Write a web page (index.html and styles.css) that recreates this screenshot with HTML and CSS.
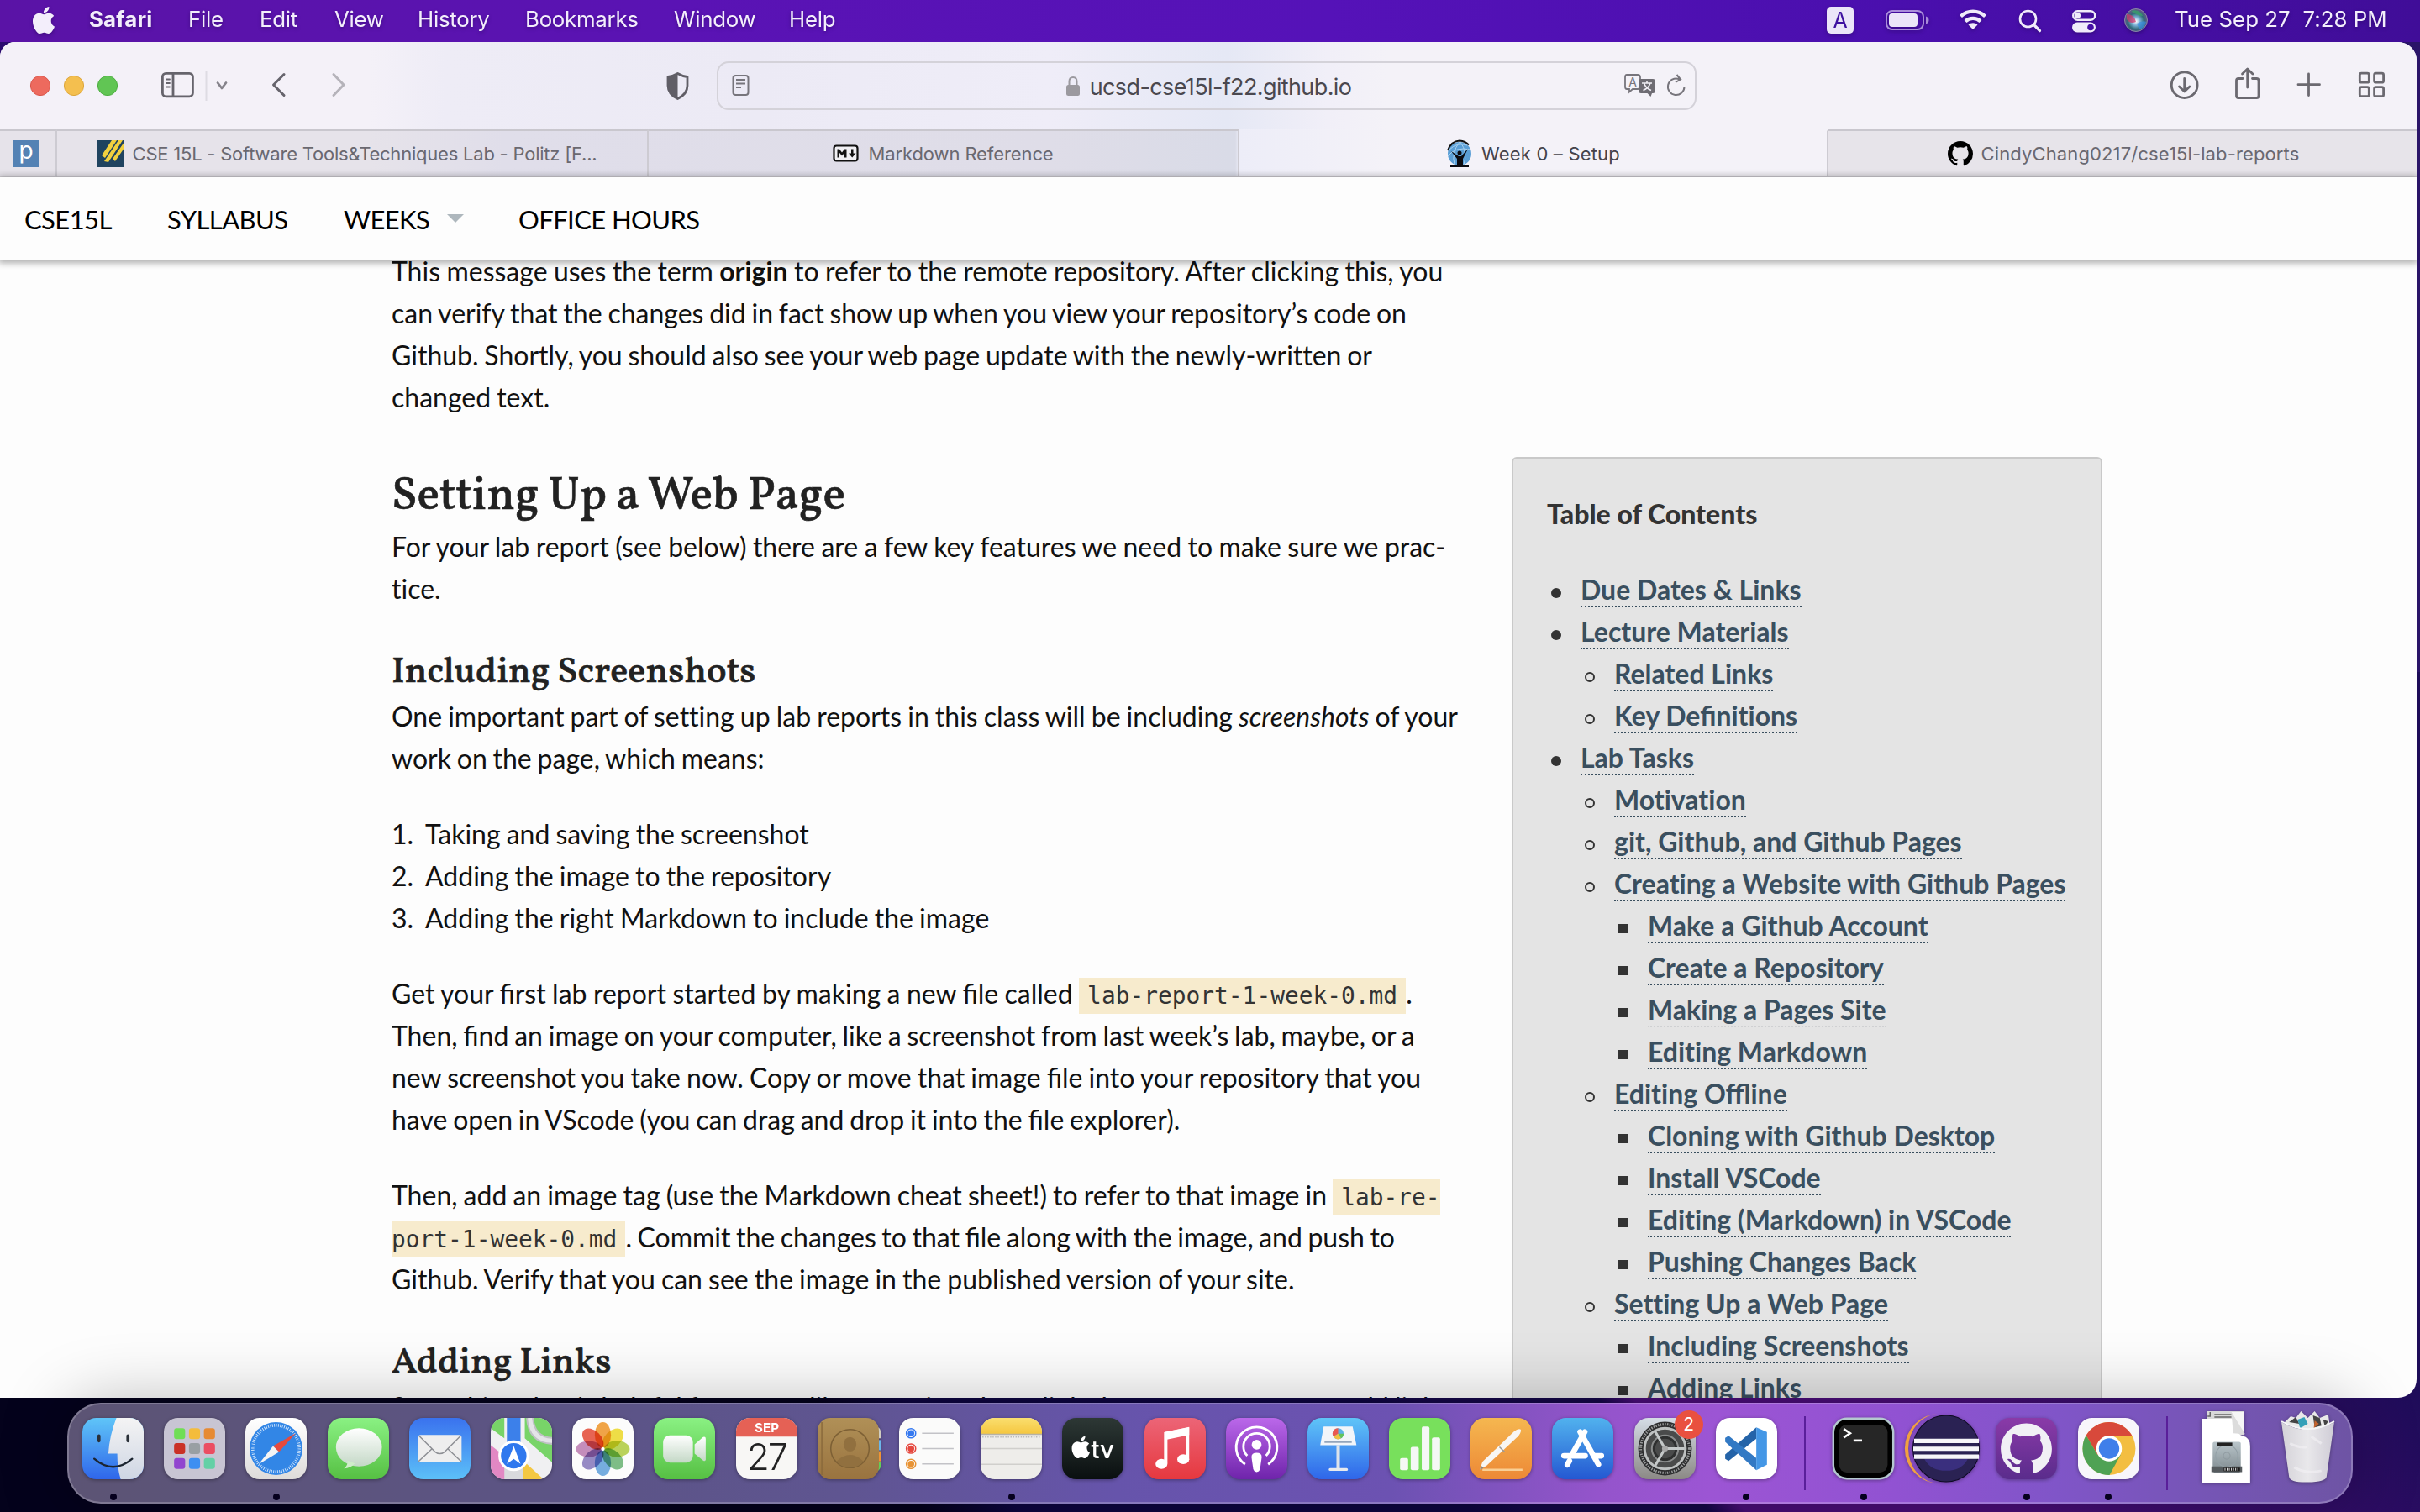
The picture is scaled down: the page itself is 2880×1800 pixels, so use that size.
FILE: index.html
```html
<!DOCTYPE html>
<html lang="en">
<head>
<meta charset="utf-8">
<title>Week 0 – Setup</title>
<link rel="stylesheet" href="styles.css">
</head>
<body>
<div class="desktop">
  <header class="menubar">
    <svg class="apple" viewBox="0 0 24 24"><path d="M12.152 6.896c-.948 0-2.415-1.078-3.96-1.04-2.04.027-3.91 1.183-4.961 3.014-2.117 3.675-.546 9.103 1.519 12.09 1.013 1.454 2.208 3.09 3.792 3.039 1.52-.065 2.09-.987 3.935-.987 1.831 0 2.35.987 3.96.948 1.637-.026 2.676-1.48 3.676-2.948 1.156-1.688 1.636-3.325 1.662-3.415-.039-.013-3.182-1.221-3.22-4.857-.026-3.04 2.48-4.494 2.597-4.559-1.429-2.09-3.623-2.324-4.39-2.376-2-.156-3.675 1.09-4.61 1.09zM15.53 3.83c.843-1.012 1.4-2.427 1.245-3.83-1.207.052-2.662.805-3.532 1.818-.78.896-1.454 2.338-1.273 3.714 1.338.104 2.715-.688 3.559-1.701"/></svg>
    <nav class="menus">
      <span class="menu app">Safari</span><span class="menu file">File</span><span class="menu edit">Edit</span><span class="menu view">View</span><span class="menu history">History</span><span class="menu bookmarks">Bookmarks</span><span class="menu window-menu">Window</span><span class="menu">Help</span>
    </nav>
    <svg class="status" width="382" height="48" viewBox="2174 0 382 48">
      <rect x="2174" y="8" width="32" height="32" rx="5" fill="#ebe5f8"/>
      <text x="2190" y="33" font-size="25" text-anchor="middle" fill="#3e10a0">A</text>
      <rect x="2245" y="13" width="44" height="22" rx="7" fill="none" stroke="#a98cda" stroke-width="2"/>
      <rect x="2248" y="16" width="34" height="16" rx="4" fill="#ebe5f8"/>
      <path d="M2292 19.500q3.500 1.500 3.500 4.500t-3.500 4.500z" fill="#a98cda"/>
      <g fill="none" stroke="#f0ebfa" stroke-width="4.200">
        <path d="M2333.500 19.500a21 21 0 0 1 29 0"/><path d="M2339 25.500a13 13 0 0 1 18 0"/>
      </g>
      <path d="M2342.500 29.500a8 8 0 0 1 11 0l-5.500 5.500z" fill="#f0ebfa"/>
      <circle cx="2413.500" cy="22.500" r="9.500" fill="none" stroke="#f0ebfa" stroke-width="2.600"/>
      <path d="M2420.500 29.500l7 7" stroke="#f0ebfa" stroke-width="3.200" stroke-linecap="round"/>
      <rect x="2467.200" y="13.200" width="26" height="10.600" rx="5.300" fill="none" stroke="#f0ebfa" stroke-width="2.400"/>
      <circle cx="2472.500" cy="18.500" r="3.600" fill="#f0ebfa"/>
      <rect x="2466" y="26.500" width="28" height="12" rx="6" fill="#f0ebfa"/>
      <circle cx="2488" cy="32.500" r="3.800" fill="#450fa6"/>
      <defs>
        <radialGradient id="siri" cx=".5" cy=".55"><stop offset="0" stop-color="#fff"/><stop offset=".35" stop-color="#7fb4d8"/><stop offset=".7" stop-color="#2f6a78"/><stop offset="1" stop-color="#5c5a86"/></radialGradient>
      </defs>
      <circle cx="2542" cy="24" r="13.500" fill="url(#siri)" stroke="#8a86a8"/>
      <path d="M2531 17q9 0 11 9q-7 3-11-3z" fill="#d0386c" opacity=".75"/>
      <path d="M2536 13q10-3 14 6q-6 0-14-6z" fill="#3aa06a" opacity=".8"/>
      <path d="M2543 28q7-4 11-2q-2 8-8 9z" fill="#3a8fe0" opacity=".7"/>
    </svg>
    <span class="clock">Tue Sep 27&nbsp; 7:28 PM</span>
  </header>

  <main class="window">
    <div class="toolbar">
      <svg width="398" height="104" viewBox="30 50 398 104">
        <circle cx="48" cy="102" r="11.600" fill="#ed6a5e" stroke="#d9574c"/><circle cx="88" cy="102" r="11.600" fill="#f4bf4f" stroke="#dda63c"/><circle cx="128" cy="102" r="11.600" fill="#61c554" stroke="#4dae41"/>
        <g fill="none" stroke="#66646c" stroke-width="2.800" stroke-linecap="round" stroke-linejoin="round">
          <rect x="193.400" y="87.400" width="36" height="27.400" rx="4"/><path d="M206 88v26"/>
          <path d="M198 94.500h4M198 99h4M198 103.500h4" stroke-width="1.800"/>
          <path d="M259 98.500l5 6.500 5-6.500" stroke="#85838b"/>
          <path d="M338 88.500l-12.500 12.500 12.500 12.500" stroke-width="3"/>
          <path d="M397 88.500l12 12.500-12 12.500" stroke="#b5b3ba" stroke-width="3"/>
        </g>
        <path d="M245.500 84v36" stroke="#dedce3" stroke-width="2"/>
      </svg>
      <svg class="shield" width="28" height="34" viewBox="792 84 28 34">
        <path d="M806.500 86.500q6 3.500 11.500 4v10.500q0 10-11.500 15.500-11.500-5.500-11.500-15.500v-10.500q5.500-.5 11.500-4z" fill="none" stroke="#605e66" stroke-width="2.800" stroke-linejoin="round"/><path d="M806.500 86.500v30q-11.500-5.500-11.500-15.500v-10.500z" fill="#605e66"/>
      </svg>
      <div class="address">
        <svg width="22" height="28" viewBox="870 89 22 28"><g fill="none" stroke="#77757c" stroke-width="2"><rect x="872.500" y="91" width="18" height="23" rx="3"/><path d="M876 96h11M876 100.500h11M876 105h6"/></g></svg>
        <div class="url">
          <svg width="16" height="25" viewBox="1268 91 16 25"><rect x="1268" y="102" width="16" height="13" rx="2.500" fill="#9b999f"/><path d="M1271.500 103v-5q0-5 4.500-5t4.500 5v5" fill="none" stroke="#9b999f" stroke-width="2"/></svg>
          <span>ucsd-cse15l-f22.github.io</span>
        </div>
        <svg width="76" height="32" viewBox="1931 86 76 32">
          <path d="M1935 89h13q3 0 3 3v11q0 3-3 3h-6l-4 3.500v-3.500h-3q-2 0-2-3v-11q0-3 2-3z" fill="none" stroke="#77757c" stroke-width="1.800"/>
          <text x="1942" y="103" font-size="14" text-anchor="middle" fill="#77757c">A</text>
          <path d="M1952 94h14q3 0 3 3v11q0 3-3 3h-1l-1.500 4-4-4h-7.500q-3 0-3-3v-11q0-3 3-3z" fill="#6e6c73"/>
          <path d="M1953 99h12M1959 96.500v2.500M1963 99q-2 6-8.500 8.500M1955.500 99q2 6 8.500 8.500" fill="none" stroke="#f0eef5" stroke-width="1.600"/>
          <path d="M2003.500 103.500a9.800 9.800 0 1 1-6.500-9.500l-1 .2M1994.500 89l4.500 5.500-6 3.500" fill="none" stroke="#77757c" stroke-width="2"/>
        </svg>
      </div>
      <svg class="actions" width="258" height="104" viewBox="2580 50 258 104">
        <g fill="none" stroke="#6b6970" stroke-width="2.800" stroke-linecap="round" stroke-linejoin="round">
          <circle cx="2599.700" cy="101.200" r="15.400"/><path d="M2599.700 93.500v15M2593.500 103l6.200 6 6.200-6"/>
          <path d="M2669 93.500h-5q-2.500 0-2.500 2.500v18q0 2.500 2.500 2.500h21.500q2.500 0 2.500-2.500v-18q0-2.500-2.500-2.500h-5M2674.700 104v-21.500M2668.500 88l6.200-6 6.200 6"/>
          <path d="M2747.500 88v25.500M2735 100.700h25.500"/>
          <rect x="2808.300" y="87.200" width="11" height="11" rx="2"/><rect x="2825.600" y="87.200" width="11" height="11" rx="2"/><rect x="2808.300" y="103.700" width="11" height="11" rx="2"/><rect x="2825.600" y="103.700" width="11" height="11" rx="2"/>
        </g>
      </svg>
    </div>

    <div class="tabs">
      <div class="tab pinned"><svg width="32" height="32" viewBox="0 0 32 32"><rect width="32" height="32" fill="#5482b4"/><text x="16" y="22" font-size="28" text-anchor="middle" fill="#fff">p</text></svg></div>
      <div class="tab first"><svg width="32" height="32" viewBox="0 0 32 32"><rect width="32" height="32" fill="#1f435f"/><path d="M5 18L17 0h6L9 21zM8 25L25 0h5L13 26zM18 22L32 2v7L21 25z" fill="#f2d03e"/></svg><span>CSE 15L - Software Tools&amp;Techniques Lab - Politz [F...</span></div>
      <div class="tab second"><svg width="32" height="22" viewBox="0 0 32 22"><rect x="1.500" y="1.500" width="28" height="18" rx="3" fill="#f1f0f4" stroke="#111" stroke-width="2.200"/><path d="M5.500 15.500v-10h2.500l3 4 3-4h2.500v10H14V9.800l-3 3.800-3-3.800v5.700zM22 5.500h2.500v5h3l-4.300 5-4.200-5h3z" fill="#111"/></svg><span>Markdown Reference</span></div>
      <div class="tab active"><svg width="32" height="34" viewBox="0 0 32 34"><circle cx="16" cy="17" r="14" fill="#5b9fd6"/><path d="M4 12q9-9 21-5M2 20q9-12 27-8M10 30q-4-14 6-27M21 30q5-14-4-27" stroke="#a9d2f0" fill="none"/><path d="M2 13Q6 2 16 1.500q7 .5 11 5" stroke="#111" stroke-width="2" fill="none"/><circle cx="16" cy="16" r="2.500" fill="#0b0b10"/><path d="M6 14l9 6h3l8-9-6 12v8h7v2H5v-2h8v-8z" fill="#0b0b10"/></svg><span>Week 0 – Setup</span></div>
      <div class="tab last"><svg width="30" height="30" viewBox="0 0 16 16"><path d="M8 0C3.580 0 0 3.580 0 8c0 3.540 2.290 6.530 5.470 7.590.4.070.55-.17.55-.38 0-.19-.01-.82-.01-1.490-2.010.37-2.530-.49-2.690-.94-.09-.23-.48-.94-.82-1.130-.28-.15-.68-.52-.01-.53.63-.01 1.080.58 1.230.82.72 1.210 1.870.87 2.330.66.07-.52.28-.87.51-1.070-1.780-.2-3.640-.89-3.640-3.950 0-.87.31-1.590.82-2.150-.08-.2-.36-1.020.08-2.120 0 0 .67-.21 2.200.82.64-.18 1.320-.27 2-.27.68 0 1.360.09 2 .27 1.530-1.040 2.200-.82 2.200-.82.44 1.100.16 1.920.08 2.120.51.56.82 1.270.82 2.150 0 3.070-1.870 3.750-3.650 3.950.29.25.54.73.54 1.480 0 1.070-.01 1.930-.01 2.200 0 .21.15.46.55.38A8.013 8.013 0 0016 8c0-4.420-3.580-8-8-8z"/></svg><span>CindyChang0217/cse15l-lab-reports</span></div>
    </div>

    <nav class="site-nav">
      <a class="home">CSE15L</a><a class="syllabus">SYLLABUS</a><a class="weeks">WEEKS</a><i class="caret"></i><a>OFFICE HOURS</a>
    </nav>

    <div class="page">
      <article class="content">
        <p><span class="loose">This message uses the term <b>origin</b> to refer to the remote repository. After clicking this, you</span><br><span class="tight">can verify that the changes did in fact show up when you view your repository’s code on<br>Github. Shortly, you should also see your web page update with the newly-written or</span><br>changed text.</p>
        <h2>Setting Up a Web Page</h2>
        <p><span class="loose">For your lab report (see below) there are a few key features we need to make sure we prac-</span><br>tice.</p>
        <h3>Including Screenshots</h3>
        <p>One important part of setting up lab reports in this class will be including <em>screenshots</em> of your<br><span class="tight">work on the page, which means:</span></p>
        <ol>
          <li><span class="num">1.</span>Taking and saving the screenshot</li>
          <li><span class="num">2.</span>Adding the image to the repository</li>
          <li><span class="num">3.</span>Adding the right Markdown to include the image</li>
        </ol>
        <p><span class="loose">Get your <span class="fi">first</span> lab report started by making a new <span class="fi">file</span> called </span><code>lab-report-1-week-0.md</code>.<br><span class="tight">Then, <span class="fi">find</span> an image on your computer, like a screenshot from last week’s lab, maybe, or a</span><br>new screenshot you take now. Copy or move that image <span class="fi">file</span> into your repository that you<br><span class="tight">have open in VScode (you can drag and drop it into the <span class="fi">file</span> explorer).</span></p>
        <p>Then, add an image tag (use the Markdown cheat sheet!) to refer to that image in <code>lab-re-<br>port-1-week-0.md</code><span class="tighter">. Commit the changes to that <span class="fi">file</span> along with the image, and push to</span><br>Github. Verify that you can see the image in the published version of your site.</p>
        <h3>Adding Links</h3>
        <p>Something that is helpful for a page like yours is to have links between pages or to add link</p>
      </article>
      <aside class="toc">
        <strong>Table of Contents</strong>
        <ul>
          <li><a>Due Dates &amp; Links</a></li>
          <li><a>Lecture Materials</a>
            <ul><li><a>Related Links</a></li><li><a>Key <span class="fi">Defi</span>nitions</a></li></ul></li>
          <li><a>Lab Tasks</a>
            <ul>
              <li><a>Motivation</a></li>
              <li><a>git, Github, and Github Pages</a></li>
              <li><a>Creating a Website with Github Pages</a>
                <ul><li><a>Make a Github Account</a></li><li><a>Create a Repository</a></li><li><a class="faded">Making a Pages Site</a></li><li><a>Editing Markdown</a></li></ul></li>
              <li><a>Editing <span class="fi">Offline</span></a>
                <ul><li><a>Cloning with Github Desktop</a></li><li><a>Install VSCode</a></li><li><a>Editing (Markdown) in VSCode</a></li><li><a>Pushing Changes Back</a></li></ul></li>
              <li><a>Setting Up a Web Page</a>
                <ul><li><a>Including Screenshots</a></li><li><a>Adding Links</a></li></ul></li>
            </ul></li>
        </ul>
      </aside>
    </div>
  </main>

  <svg class="defs" width="0" height="0">
    <defs>
      <clipPath id="tile"><rect width="72" height="72" rx="16.500"/></clipPath>
      <linearGradient id="gBlue" x2="0" y2="1"><stop offset="0" stop-color="#5fc5f8"/><stop offset="1" stop-color="#2f66ea"/></linearGradient>
      <linearGradient id="gMail" x2="0" y2="1"><stop offset="0" stop-color="#3a72ee"/><stop offset="1" stop-color="#5cc0f8"/></linearGradient>
      <linearGradient id="gFace" x2="0" y2="1"><stop offset="0" stop-color="#f4f4f4"/><stop offset="1" stop-color="#cfd6e4"/></linearGradient>
      <linearGradient id="gGreen" x2="0" y2="1"><stop offset="0" stop-color="#8af183"/><stop offset="1" stop-color="#56c043"/></linearGradient>
      <linearGradient id="gWhite" x2="0" y2="1"><stop offset="0" stop-color="#fff"/><stop offset="1" stop-color="#dedcda"/></linearGradient>
      <linearGradient id="gSilver" x2="0" y2="1"><stop offset="0" stop-color="#fff"/><stop offset="1" stop-color="#c4d8c6"/></linearGradient>
      <linearGradient id="gRed" x2="0" y2="1"><stop offset="0" stop-color="#ec6577"/><stop offset="1" stop-color="#e6383f"/></linearGradient>
      <linearGradient id="gPod" x2="0" y2="1"><stop offset="0" stop-color="#bb68ea"/><stop offset="1" stop-color="#6f24ab"/></linearGradient>
      <linearGradient id="gOrange" x2="0" y2="1"><stop offset="0" stop-color="#f5b750"/><stop offset="1" stop-color="#ed8936"/></linearGradient>
      <linearGradient id="gStore" x2="0" y2="1"><stop offset="0" stop-color="#51b2ee"/><stop offset="1" stop-color="#2458d2"/></linearGradient>
      <linearGradient id="gTv" x2="0" y2="1"><stop offset="0" stop-color="#2d3835"/><stop offset="1" stop-color="#0a0f10"/></linearGradient>
      <linearGradient id="gBrown" x2="0" y2="1"><stop offset="0" stop-color="#b09057"/><stop offset="1" stop-color="#99733f"/></linearGradient>
      <linearGradient id="gGit" x2="0" y2="1"><stop offset="0" stop-color="#8a3aa8"/><stop offset="1" stop-color="#5a2c8c"/></linearGradient>
      <linearGradient id="gYellow" x2="0" y2="1"><stop offset="0" stop-color="#fadf70"/><stop offset="1" stop-color="#f5c63e"/></linearGradient>
      <linearGradient id="gGear" x2="0" y2="1"><stop offset="0" stop-color="#d5dde6"/><stop offset="1" stop-color="#8b8985"/></linearGradient>
      <linearGradient id="gDisk" x2="0" y2="1"><stop offset="0" stop-color="#b9c5ca"/><stop offset="1" stop-color="#7f8a8f"/></linearGradient>
      <linearGradient id="gBin" x2="1" y2="0"><stop offset="0" stop-color="#d4d2d8"/><stop offset=".5" stop-color="#e9e8eb"/><stop offset="1" stop-color="#cfccd6"/></linearGradient>
    </defs>
  </svg>

  <footer class="dock">
    <div class="slot running"><svg viewBox="0 0 72 72"><g clip-path="url(#tile)"><rect width="72" height="72" fill="url(#gBlue)"/><path d="M40 0Q32 20 30.500 42H41Q41 60 45 72H72V0z" fill="url(#gFace)"/></g><path d="M19.500 21v6M53.500 21v6" stroke="#2a3038" stroke-width="3.600" stroke-linecap="round"/><path d="M14 48Q36 67 58.500 48" fill="none" stroke="#1c2530" stroke-width="2.400" stroke-linecap="round"/></svg></div>
    <div class="slot"><svg viewBox="0 0 72 72"><rect width="72" height="72" rx="16.500" fill="#c8c5d3"/><g><rect x="12" y="12" width="13" height="13" rx="3" fill="#70de55"/><rect x="29.500" y="12" width="13" height="13" rx="3" fill="#f4bc3c"/><rect x="47" y="12" width="13" height="13" rx="3" fill="#e68a34"/><rect x="12" y="29.500" width="13" height="13" rx="3" fill="#ca3126"/><rect x="29.500" y="29.500" width="13" height="13" rx="3" fill="#999fa3"/><rect x="47" y="29.500" width="13" height="13" rx="3" fill="#eb4d62"/><rect x="12" y="47" width="13" height="13" rx="3" fill="#9145cf"/><rect x="29.500" y="47" width="13" height="13" rx="3" fill="#3d8ff2"/><rect x="47" y="47" width="13" height="13" rx="3" fill="#63d0a6"/></g></svg></div>
    <div class="slot running"><svg viewBox="0 0 72 72"><rect width="72" height="72" rx="16.500" fill="url(#gWhite)"/><circle cx="36" cy="36" r="31" fill="#3286e6"/><circle cx="36" cy="36" r="27.300" fill="none" stroke="#d6e8fb" stroke-width="3.500" stroke-dasharray=".9 1.480"/><path d="M59 18L32.500 33l7 7z" fill="#e64a3e"/><path d="M15.500 54.500L32.500 33l7 7z" fill="#f4f4f4"/></svg></div>
    <div class="slot"><svg viewBox="0 0 72 72"><rect width="72" height="72" rx="16.500" fill="url(#gGreen)"/><ellipse cx="36.700" cy="34.500" rx="27" ry="22.500" fill="url(#gSilver)"/><path d="M23 50q1 6-4 9.500 8-.5 13-6z" fill="#d0ecca"/></svg></div>
    <div class="slot"><svg viewBox="0 0 72 72"><rect width="72" height="72" rx="16.500" fill="url(#gMail)"/><rect x="10.500" y="20" width="51" height="32" rx="3" fill="#eeeeee"/><path d="M11 51l16-15M61 51L45 36M11.500 21L30 39.500q6 5 12 0L60.500 21" fill="none" stroke="#8d8f94" stroke-width="1.500"/></svg></div>
    <div class="slot"><svg viewBox="0 0 72 72"><g clip-path="url(#tile)"><rect width="72" height="72" fill="#f0f0f2"/><path d="M0 0h16v24L0 12zM40 0h32v52L40 24z" fill="#78d468"/><path d="M46 0q2 27 28 27" fill="none" stroke="#bfc1c4" stroke-width="9"/><path d="M46 0q2 27 28 27" fill="none" stroke="#e4e4e8" stroke-width="5"/><path d="M0 32l18 14v26H0z" fill="#e288c4"/><path d="M38 50l24 22H38z" fill="#f4c843"/><path d="M16 40h22v32H16z" fill="#d9dadd"/><path d="M19 0h16v36H19z" fill="#3c80ea"/></g><circle cx="27" cy="44.500" r="16.500" fill="#2f78ee" stroke="#fff" stroke-width="3"/><path d="M27 33l8 21-8-6-8 6z" fill="#fff"/></svg></div>
    <div class="slot"><svg viewBox="0 0 72 72"><rect width="72" height="72" rx="16.500" fill="#fcfcfc"/><g class="petals"><ellipse cx="36" cy="20" rx="9.500" ry="15" fill="#f29a30"/><ellipse cx="36" cy="20" rx="9.500" ry="15" fill="#f0dc2e" transform="rotate(45 36 36.500)"/><ellipse cx="36" cy="20" rx="9.500" ry="15" fill="#b3cf45" transform="rotate(90 36 36.500)"/><ellipse cx="36" cy="20" rx="9.500" ry="15" fill="#6db878" transform="rotate(135 36 36.500)"/><ellipse cx="36" cy="20" rx="9.500" ry="15" fill="#64a4de" transform="rotate(180 36 36.500)"/><ellipse cx="36" cy="20" rx="9.500" ry="15" fill="#8a7cc0" transform="rotate(225 36 36.500)"/><ellipse cx="36" cy="20" rx="9.500" ry="15" fill="#c080b4" transform="rotate(270 36 36.500)"/><ellipse cx="36" cy="20" rx="9.500" ry="15" fill="#e8503c" transform="rotate(315 36 36.500)"/></g><circle cx="36" cy="36.500" r="2" fill="#fff"/></svg></div>
    <div class="slot"><svg viewBox="0 0 72 72"><rect width="72" height="72" rx="16.500" fill="url(#gGreen)"/><rect x="11" y="20.500" width="35" height="32" rx="8" fill="url(#gSilver)"/><path d="M48 31l10-8.500q3-1 3 2v24q0 3-3 1.500L48 42z" fill="url(#gSilver)"/></svg></div>
    <div class="slot"><svg viewBox="0 0 72 72"><rect width="72" height="72" rx="16.500" fill="#f8f7f5"/><path d="M0 22V16.500A16.500 16.500 0 0 1 16.500 0h39A16.500 16.500 0 0 1 72 16.500V22z" fill="#e56155"/><text x="36" y="17" font-size="15" font-weight="700" text-anchor="middle" fill="#fff">SEP</text><text x="36" y="61" font-size="43" font-weight="300" letter-spacing="-2" text-anchor="middle" fill="#222">27</text></svg></div>
    <div class="slot"><svg viewBox="0 0 72 72"><path d="M68 10q6 1 6 6v8h-6z" fill="#cfccc0"/><path d="M68 26h6v12h-6z" fill="#6cb6ea"/><path d="M68 39h6v12h-6z" fill="#ef9434"/><path d="M68 52h6v6q-2 5-6 5z" fill="#62cf58"/><rect width="72" height="72" rx="15" fill="url(#gBrown)"/><path d="M5 5v62" stroke="#8a6a3c" stroke-width="1.500"/><g fill="#91703f" stroke="#7d6035"><circle cx="38" cy="36" r="22.500" fill="none" stroke-width="1.500"/><ellipse cx="38" cy="31" rx="7.500" ry="8.500" stroke="none"/><path d="M22 51q16-15 32 0-6 7.500-16 7.500T22 51z" stroke="none"/></g></svg></div>
    <div class="slot"><svg viewBox="0 0 72 72"><rect width="72" height="72" rx="16.500" fill="#fbfbfa"/><g stroke-width="1.500" fill="none"><circle cx="14" cy="18" r="5.500" stroke="#3478f0"/><circle cx="14" cy="36" r="5.500" stroke="#e5483e"/><circle cx="14" cy="54" r="5.500" stroke="#e89334"/><path d="M27 18h37M27 36h37M27 54h37" stroke="#c3c3c7"/></g><circle cx="14" cy="18" r="3.800" fill="#3478f0"/><circle cx="14" cy="36" r="3.800" fill="#e5483e"/><circle cx="14" cy="54" r="3.800" fill="#e89334"/></svg></div>
    <div class="slot running"><svg viewBox="0 0 72 72"><rect width="72" height="72" rx="16.500" fill="#eeedea"/><path d="M0 19V16.500A16.500 16.500 0 0 1 16.500 0h39A16.500 16.500 0 0 1 72 16.500V19z" fill="url(#gYellow)"/><path d="M0 19.200h72" stroke="#b6b2a6" stroke-width="1.400"/><path d="M2 22.500h68" stroke="#bbb" stroke-width="1.500" stroke-dasharray="1.500 1.500"/><path d="M0 36h72M0 54.500h72" stroke="#d0cfcc" stroke-width="1.300"/></svg></div>
    <div class="slot"><svg viewBox="0 0 72 72"><rect width="72" height="72" rx="16.500" fill="url(#gTv)"/><path transform="translate(9 21.500) scale(1.080)" fill="#fff" d="M12.152 6.896c-.948 0-2.415-1.078-3.960-1.040-2.040.027-3.910 1.183-4.961 3.014-2.117 3.675-.546 9.103 1.519 12.090 1.013 1.454 2.208 3.090 3.792 3.039 1.520-.065 2.090-.987 3.935-.987 1.831 0 2.350.987 3.960.948 1.637-.026 2.676-1.480 3.676-2.948 1.156-1.688 1.636-3.325 1.662-3.415-.039-.013-3.182-1.221-3.220-4.857-.026-3.040 2.480-4.494 2.597-4.559-1.429-2.090-3.623-2.324-4.390-2.376-2-.156-3.675 1.090-4.610 1.090zM15.530 3.830c.843-1.012 1.400-2.427 1.245-3.830-1.207.052-2.662.805-3.532 1.818-.78.896-1.454 2.338-1.273 3.714 1.338.104 2.715-.688 3.559-1.701"/><text x="47.500" y="47" font-size="29" font-weight="500" text-anchor="middle" fill="#fff">tv</text></svg></div>
    <div class="slot"><svg viewBox="0 0 72 72"><rect width="72" height="72" rx="16.500" fill="url(#gRed)"/><path d="M25 53.500V18.500L50.500 13v36" fill="none" stroke="#fff" stroke-width="4"/><path d="M24 16.500l28.500-5.500v9L24 26z" fill="#fff"/><ellipse cx="20" cy="54" rx="7" ry="5.800" fill="#fff"/><ellipse cx="45.500" cy="48.500" rx="7" ry="5.800" fill="#fff"/></svg></div>
    <div class="slot"><svg viewBox="0 0 72 72"><rect width="72" height="72" rx="16.500" fill="url(#gPod)"/><g fill="none" stroke="#fff" stroke-width="2.800"><path d="M22.500 54.500a24 24 0 1 1 27 0"/><path d="M25 44.500a15.500 15.500 0 1 1 22 0"/></g><circle cx="36" cy="31.500" r="5.800" fill="#fff"/><path d="M30 46q0-5 6-5t6 5l-2 14q-1 3.500-4 3.500t-4-3.500z" fill="#fff"/></svg></div>
    <div class="slot"><svg viewBox="0 0 72 72"><rect width="72" height="72" rx="16.500" fill="url(#gBlue)"/><path d="M36 32v28" stroke="#dde3ea" stroke-width="4"/><rect x="25" y="59" width="22.500" height="3.200" rx="1.500" fill="#e8eaee"/><path d="M19 10h34l4.500 22H15z" fill="#f2f5f9"/><path d="M20 28h32" stroke="#93a5bb" stroke-width="2.500"/><circle cx="36" cy="18.500" r="6.500" fill="#5bb3e8"/><path d="M36 18.500V12a6.500 6.500 0 0 0-5.500 10z" fill="#ea5950"/><path d="M36 18.500l-5.500 3.500a6.500 6.500 0 0 0 9 2z" fill="#f2c140"/><path d="M36 18.500l3.500 5.500a6.500 6.500 0 0 0 3-5.500z" fill="#63c45a"/></svg></div>
    <div class="slot"><svg viewBox="0 0 72 72"><rect width="72" height="72" rx="16.500" fill="#78e05c"/><g fill="#f5f8f5"><rect x="13" y="47" width="9.500" height="14.500" rx="2"/><rect x="25.500" y="34" width="9.500" height="27.500" rx="2"/><rect x="38.500" y="10" width="9" height="51.500" rx="2"/><rect x="50.500" y="23" width="9.500" height="38.500" rx="2"/></g></svg></div>
    <div class="slot"><svg viewBox="0 0 72 72"><rect width="72" height="72" rx="16.500" fill="url(#gOrange)"/><path d="M14 61h47" stroke="#f9cf94" stroke-width="2.500"/><path d="M11 61l3-9.500L51 16q5-4 8-2.500 1 3-3.500 8.500L19 56z" fill="#f8f6f3"/><path d="M11 61l1.500-5 3 3z" fill="#8b8680"/><path d="M34 34l6 6" stroke="#999" stroke-width="1.500"/></svg></div>
    <div class="slot"><svg viewBox="0 0 72 72"><rect width="72" height="72" rx="16.500" fill="url(#gStore)"/><g stroke="#fff" stroke-width="6.500" stroke-linecap="round"><path d="M38.500 16.500L24 42M33 16.500L54.500 54.500M14 44.500h25M50 44.500h8M20.500 50.500l-2.500 4.500"/></g></svg></div>
    <div class="slot"><svg viewBox="0 0 72 72"><rect width="72" height="72" rx="16.500" fill="url(#gGear)"/><circle cx="36" cy="36" r="31.500" fill="#2c2d2e"/><circle cx="36" cy="36" r="28.500" fill="none" stroke="#999b9b" stroke-width="3" stroke-dasharray="1.400 1.330"/><circle cx="36" cy="36" r="24" fill="#4a4b4b" stroke="#bdc0c0" stroke-width="3"/><circle cx="36" cy="36" r="13" fill="none" stroke="#2e2f2f" stroke-width="3"/><circle cx="36" cy="36" r="15.500" fill="none" stroke="#8b8d8d" stroke-width="2"/><path d="M36 36h23M36 36L24.500 16M36 36L24.500 56" stroke="#c4c8c8" stroke-width="3"/><circle cx="36" cy="36" r="3.500" fill="#aaa"/></svg><span class="badge">2</span></div>
    <div class="slot running"><svg viewBox="0 0 72 72"><rect width="72" height="72" rx="16.500" fill="#fff"/><path d="M47.500 11L11 43v5l4 2.500 32.500-26z" fill="#2463a8"/><path d="M47.500 61.500L11 28v-4.500l4-2.500 32.500 26z" fill="#3279c4"/><path d="M47.500 11L60 16.500v38.500l-12.500 6.500z" fill="#4497e6"/></svg></div>
    <i class="divider"></i>
    <div class="slot running"><svg viewBox="0 0 72 72"><rect x=".8" y=".8" width="70.400" height="70.400" rx="16" fill="#000" stroke="#b4c8cf" stroke-width="2.400"/><rect x="7.500" y="8" width="57" height="56" rx="9" fill="#262626"/><path d="M13 13l7.500 5-7.500 5" fill="none" stroke="#fff" stroke-width="2.600"/><path d="M24.500 26.500h10" stroke="#fff" stroke-width="2.600"/></svg></div>
    <div class="slot"><svg viewBox="0 0 72 72"><path d="M30-5A41 41 0 0 0 30 77 36 40 0 0 1 30-5z" fill="#f0a040"/><circle cx="37.500" cy="36" r="39" fill="#2a2253" stroke="#0d0a22" stroke-width="1"/><path d="M12 48h51q-7 14-25.500 14T12 48z" fill="#3a2f7e"/><path d="M0 27h76M-1 36.300h77M0 45.500h76" stroke="#f6f6f9" stroke-width="5"/></svg></div>
    <div class="slot running"><svg viewBox="0 0 72 72"><rect width="72" height="72" rx="16.500" fill="url(#gGit)"/><path transform="translate(6 6.500) scale(3.750)" fill="#f1f0f5" d="M8 0C3.580 0 0 3.580 0 8c0 3.540 2.290 6.530 5.470 7.590.4.070.55-.17.55-.38 0-.19-.01-.82-.01-1.490-2.010.37-2.530-.49-2.690-.94-.09-.23-.48-.94-.82-1.130-.28-.15-.68-.52-.01-.53.63-.01 1.080.58 1.230.82.72 1.210 1.870.87 2.330.66.07-.52.28-.87.51-1.070-1.780-.2-3.640-.89-3.640-3.950 0-.87.31-1.590.82-2.150-.08-.2-.36-1.020.08-2.120 0 0 .67-.21 2.200.82.64-.18 1.320-.27 2-.27.68 0 1.360.09 2 .27 1.530-1.040 2.200-.82 2.200-.82.44 1.100.16 1.920.08 2.120.51.56.82 1.270.82 2.150 0 3.070-1.870 3.750-3.650 3.950.29.25.54.73.54 1.480 0 1.070-.01 1.930-.01 2.200 0 .21.15.46.55.38A8.013 8.013 0 0016 8c0-4.420-3.580-8-8-8z"/></svg></div>
    <div class="slot running"><svg viewBox="0 0 72 72"><rect width="72" height="72" rx="16.500" fill="#f8f6fb"/><circle cx="36.500" cy="36" r="31" fill="#f3be41"/><path d="M36.500 36L36.500 21H63.500A31 31 0 0 0 9.500 20.500L23 43.500z" fill="#d8493b"/><path d="M9.500 20.500A31 31 0 0 0 37 67L50 43.500 36.500 36 23 43.500z" fill="#4fa254"/><circle cx="36.500" cy="36" r="15" fill="#fff"/><circle cx="36.500" cy="36" r="12" fill="#3f7fea"/></svg></div>
    <i class="divider wide"></i>
    <div class="slot"><svg viewBox="0 0 72 72"><path d="M13-8h44v28H13z" fill="#d9d9d9"/><path d="M14-2h3v-5M22-4h20M22-1h20" stroke="#666" stroke-width="1.500" fill="none"/><path d="M7 1h36q4 18 12 20 9 2 9 12v43H7z" fill="#fff"/><path d="M42-7h15v26z" fill="#f6f6f6"/><path d="M42-7l16 26-14-1z" fill="#dcdcdc"/><rect x="20" y="28" width="33" height="36" rx="2" fill="url(#gDisk)"/><path d="M18.500 57h36v6.500h-36z" fill="#565b5e"/><circle cx="36.500" cy="44.500" r="13" fill="none" stroke="#93a0a6"/><circle cx="36.500" cy="44.500" r="4" fill="none" stroke="#8e999f"/><rect x="25" y="29" width="18" height="4.500" fill="#222"/><path d="M33 60.500h19" stroke="#1a1a1a" stroke-width="4"/><path d="M34 60.500h17" stroke="#ddd" stroke-width="3" stroke-dasharray="1 1.500"/></svg></div>
    <div class="slot"><svg viewBox="0 0 72 72"><path d="M8 6l8-8 6 2 6-8 8 8 8-8 6 8 10-4 2 14-26 6z" fill="#e9e9e9"/><path d="M14 5l8-6 4 8zM42-3l8 3 2 9-8 2zM54 2l6 2-4 6z" fill="#444"/><path d="M24 2l8-3 4 8-9 5z" fill="#35a0b8"/><path d="M44 3l5 4-6 5z" fill="#c2632f"/><path d="M5 5q31 18 62 0L58 69q-1 6-22 6.500T14 69z" fill="url(#gBin)"/><path d="M15 30q12 6 20 4M40 22l12 8M20 58q14 8 32 4" stroke="#f3f2f5" stroke-width="3" fill="none" opacity=".6"/><path d="M5 4q31 18 62 0" fill="none" stroke="#f6f6f8" stroke-width="1.800"/></svg></div>
  </footer>
</div>
</body>
</html>
```
FILE: styles.css
```css
*, *::before, *::after { box-sizing: border-box; }
body { margin: 0; }
svg text { font-family: Inter, "Liberation Sans", sans-serif; }
.desktop {
  width: 2880px; height: 1800px; overflow: hidden;
  display: flex; flex-direction: column;
  font-family: Inter, "Liberation Sans", sans-serif;
  background:
    linear-gradient(90deg, #2a0a6e, #3a0d90 40%, #3a0d90 60%, #2a1468) 0 0 / 100% 800px no-repeat,
    linear-gradient(45deg, #04021c 0 780px, #0d0540 860px 1240px, #150748 1290px 1440px, #4a0d78 1470px 1700px, #1d0c58 2150px);
}

/* menu bar */
.menubar {
  height: 50px; flex: none; display: flex; align-items: center;
  background: linear-gradient(90deg, #5a13a6, #5a13b4 28%, #5512b8 55%, #4a0fae 78%, #400d98);
  color: #f3eefb; font-size: 25.8px; line-height: 48px;
}
.menubar > * { filter: drop-shadow(0 2px 2px rgba(20, 0, 60, .35)); }
.apple { width: 32px; height: 32px; margin: -2px 0 0 36px; fill: #f3eefb; }
.menus { display: flex; margin: -5px 0 0 38px; }
.menu { width: 89px; letter-spacing: -.25px; }
.app { width: 118px; font-weight: 700; letter-spacing: .2px; }
.file { width: 85px; }
.view { width: 99px; }
.history { width: 128px; }
.bookmarks { width: 177px; }
.window-menu { width: 137px; }
.status { margin-left: 1146px; margin-top: -2px; flex: none; }
.clock { margin: -5px 0 0 32px; letter-spacing: .05px; white-space: pre; }

/* browser window */
.window {
  width: 2876px; height: 1614px; flex: none; overflow: hidden;
  display: flex; flex-direction: column;
  border-radius: 18px 22px 22px 0; background: #fdfdfd;
}
.toolbar {
  height: 104px; flex: none; display: flex; align-items: center; padding-left: 30px;
  background: linear-gradient(90deg, #f4f1f8 440px, #eeecf6 530px, #eceaf5 900px, #efedf8 1250px, #e5e8f5 1460px, #f1eff8 1580px, #f4f2f8 1650px);
}
.toolbar svg { flex: none; }
.shield { margin-left: 364px; }
.address {
  width: 1166px; height: 58px; margin-left: 33px; padding: 0 9px 0 15px;
  display: flex; align-items: center; justify-content: space-between;
  border: 2px solid #d4d2d9; border-radius: 14px;
}
.url { display: flex; align-items: center; gap: 12px; margin-left: 53px; color: #4a484f; font-size: 27px; letter-spacing: -.62px; }
.url span { padding-top: 2px; }
.actions { margin-left: 561px; }

.tabs {
  height: 57px; flex: none; display: flex; font-size: 22px; color: #6a6870;
  background: linear-gradient(90deg, #e6e3ea 440px, #e0deea 600px, #dfdde8 1250px, #d9dbe7 1470px, #ededf8 1475px, #f4f2f8 1650px);
}
.tab {
  display: flex; align-items: center; justify-content: center; gap: 10px; white-space: nowrap;
  border-top: 2px solid #c9c7ce; border-right: 2px solid #cdcbd2; border-bottom: 2px solid #d6d4d9;
}
.tab span { padding-top: 1px; }
.tab svg { flex: none; }
.pinned { width: 68px; padding-right: 4px; }
.first { width: 704px; padding-right: 12px; letter-spacing: -.22px; }
.second { width: 703px; padding-right: 0; letter-spacing: -.1px; }
.active { width: 701px; border-top-color: transparent; color: #45434a; letter-spacing: .18px; }
.last { width: 700px; border-right: 0; padding-left: 2px; background: #e7e4ea; letter-spacing: .12px; }

/* course site */
.site-nav {
  height: 99px; flex: none; display: flex; align-items: center; padding-left: 29px;
  position: relative; background: #fdfdfd; box-shadow: 0 1px 8px 2px rgba(0, 0, 0, .33);
  font: 31px/50px Lato, "Open Sans", sans-serif; letter-spacing: -.6px; color: #000;
}
.home { width: 170px; }
.syllabus { width: 210px; }
.weeks { width: 123px; }
.caret { width: 20px; height: 10px; margin: -1px 65px 0 0; background: #aeb7bd; clip-path: polygon(0 0, 100% 0, 50% 100%); }

.page {
  flex: 1; min-height: 0; display: flex; align-items: flex-start; padding-left: 466px;
  font: 32px/50px Lato, "Open Sans", sans-serif; color: #111;
  font-variant-ligatures: none;
}
.fi { font-variant-ligatures: common-ligatures; }
.content { width: 1333px; margin-top: -12px; white-space: nowrap; word-spacing: -1.1px; }
.loose { word-spacing: -.78px; }
.tight { word-spacing: -1.4px; }
.tighter { word-spacing: -1.65px; }
.content p { margin: 0 0 40px; }
.content h2, .content h3 {
  margin: 0; color: #222; font-family: Vollkorn, "Noto Serif", serif; font-weight: 500;
  word-spacing: 0; -webkit-text-stroke: .6px #222;
}
.content h2 { font-size: 54.9px; line-height: 60px; padding: 64px 0 4px; margin-top: -40px; }
.content h3 { font-size: 43.6px; line-height: 50px; padding: 50px 0 2px; margin-top: -40px; }
.content h2, .content h3 { position: static; }
.content ol { list-style: none; margin: 0 0 40px; padding: 0; }
.num { display: inline-block; width: 40px; }
code {
  font: 27.86px/42px "DejaVu Sans Mono", "Liberation Mono", monospace; color: #333;
  background: #f7ebcd; padding: 5px 10px; word-spacing: 0;
}

.toc {
  width: 703px; height: 1300px; margin-top: 234px; padding: 41px 0 0 40px;
  border: 2px solid #c9c9c9; border-radius: 6px; background: #e4e4e4;
  color: #333; font-weight: 700; white-space: nowrap;
}
.toc ul { list-style: none; margin: 0; padding: 0 0 0 40px; }
.toc > ul { margin-top: 40px; }
.toc a { color: #3a4f5f; border-bottom: 2px dotted #3a4f5f; }
.toc a.faded { border-color: #cfd0d2; }
.toc li::before {
  content: ""; display: inline-block; width: 12px; height: 12px; margin: 0 23px 2px -35px;
  border-radius: 50%; background: #333;
}
.toc ul ul > li::before { background: none; border: 2px solid #333; }
.toc ul ul ul > li::before { width: 11px; height: 11px; margin: 0 24px 3px -35px; border: 0; border-radius: 0; background: #333; }

/* dock */
.defs { position: absolute; }
.petals ellipse { mix-blend-mode: multiply; opacity: .88; }
.dock {
  position: relative; width: 2720px; height: 120px; margin: 6px 0 0 80px; flex: none;
  display: flex; padding: 16px 0 0 4px;
  border: 2px solid rgba(255, 255, 255, .22); border-radius: 40px;
  background: linear-gradient(92deg, #5c5474, #5c5488 25%, #5f5591 34%, #6654ab 46%, #6c52b2 58%, #9454cb 67%, #9c55d4 72%, #9152d2 80%, #8055c8 87%, #7555b4 94%, #6e54a4) border-box;
  box-shadow: 0 0 80px rgba(0, 0, 0, .28);
}
.slot { position: relative; width: 97.2px; flex: none; display: flex; justify-content: center; }
.slot svg { width: 73px; height: 73px; overflow: visible; filter: drop-shadow(0 1px 2px rgba(0, 0, 0, .35)); }
.running::after { content: ""; position: absolute; top: 90px; width: 8px; height: 8px; border-radius: 50%; background: #06001e; }
.divider { width: 42px; flex: none; height: 88px; margin-top: -2px; background: linear-gradient(#5a1f9a, #5a1f9a) 50% 0 / 2px 100% no-repeat; }
.wide { width: 43px; }
.badge {
  position: absolute; top: -9px; left: 60px; width: 34px; height: 34px; border-radius: 50%;
  background: #e9503f; color: #fff; font-size: 21px; line-height: 34px; text-align: center;
}
```
